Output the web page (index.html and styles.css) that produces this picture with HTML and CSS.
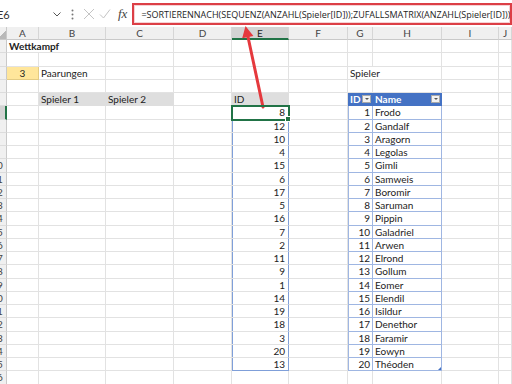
FILE: index.html
```html
<!DOCTYPE html>
<html lang="de">
<head>
    <meta charset="UTF-8">
    <title>Wettkampf</title>
    <link rel="stylesheet" href="styles.css">
</head>
<body>
    <div class="app">
        <div class="formula-bar">
            <div class="name-box">
                <span class="cell-ref">E6</span>
                <svg class="chev" width="8" height="5" viewBox="0 0 8 5"><polyline points="0.5,0.5 4,4 7.5,0.5" fill="none" stroke="#555" stroke-width="1"/></svg>
            </div>
            <svg class="dots" width="3" height="11" viewBox="0 0 3 11"><circle cx="1.5" cy="1.5" r="1" fill="#777"/><circle cx="1.5" cy="5.5" r="1" fill="#777"/><circle cx="1.5" cy="9.5" r="1" fill="#777"/></svg>
            <svg class="fb-icon" width="12" height="12" viewBox="0 0 12 12"><path d="M1 1L11 11M11 1L1 11" stroke="#c4c4c4" stroke-width="1"/></svg>
            <svg class="fb-icon" width="12" height="12" viewBox="0 0 12 12"><path d="M1 6.5L4.5 10L11 1.5" fill="none" stroke="#c4c4c4" stroke-width="1"/></svg>
            <span class="fx">fx</span>
            <div class="formula">=SORTIERENNACH(SEQUENZ(ANZAHL(Spieler[ID]));ZUFALLSMATRIX(ANZAHL(Spieler[ID])))</div>
        </div>

        <div class="sheet" id="sheet"></div>

        <svg class="arrow" width="512" height="384" viewBox="0 0 512 384">
            <line x1="263" y1="107" x2="247.8" y2="36" stroke="#e5393d" stroke-width="3" stroke-linecap="round"/>
            <polygon points="245.5,26 253.4,36 242.2,38.2" fill="#e5393d"/>
        </svg>
    </div>

    <script>
        const COLS = ['A', 'B', 'C', 'D', 'E', 'F', 'G', 'H', 'I', 'J'];
        const ROWS = 26;
        const ids = [8, 12, 10, 4, 15, 6, 17, 5, 16, 7, 2, 11, 9, 1, 14, 19, 18, 3, 20, 13];
        const players = ['Frodo', 'Gandalf', 'Aragorn', 'Legolas', 'Gimli', 'Samweis', 'Boromir',
            'Saruman', 'Pippin', 'Galadriel', 'Arwen', 'Elrond', 'Gollum', 'Eomer', 'Elendil',
            'Isildur', 'Denethor', 'Faramir', 'Eowyn', 'Théoden'];

        const cells = {
            A1: { text: 'Wettkampf', cls: 'bold', span: 2 },
            A3: { text: '3', cls: 'input' },
            B3: { text: 'Paarungen' },
            B5: { text: 'Spieler 1', cls: 'label' },
            C5: { text: 'Spieler 2', cls: 'label' },
            E5: { text: 'ID', cls: 'label' },
            G3: { text: 'Spieler', span: 2 },
            G5: { text: 'ID', cls: 'thead', filter: true },
            H5: { text: 'Name', cls: 'thead', filter: true }
        };

        ids.forEach((id, i) => {
            let cls = 'num spill';
            if (i === 0) cls += ' selected';
            if (i === ids.length - 1) cls += ' spill-end';
            cells['E' + (i + 6)] = { text: id, cls };
        });

        players.forEach((name, i) => {
            const last = i === players.length - 1 ? ' tlast' : '';
            cells['G' + (i + 6)] = { text: i + 1, cls: 'num tcell tid' + last };
            cells['H' + (i + 6)] = { text: name, cls: 'tcell tname' + last };
        });

        function cellHtml(cls, content, span) {
            const style = span ? ` style="grid-column: span ${span}"` : '';
            return `<div class="cell ${cls}"${style}>${content}</div>`;
        }

        function renderSheet() {
            let html = '<div class="corner"></div>';
            COLS.forEach(c => {
                html += `<div class="col-head${c === 'E' ? ' active' : ''}">${c}</div>`;
            });

            for (let r = 1; r <= ROWS; r++) {
                html += `<div class="row-head${r === 6 ? ' active' : ''}"><span>${r}</span></div>`;
                for (let i = 0; i < COLS.length; i++) {
                    const cell = cells[COLS[i] + r];
                    if (!cell) {
                        html += cellHtml('', '');
                        continue;
                    }
                    let content = `<span class="txt">${cell.text}</span>`;
                    if (cell.filter) content += '<i class="dd"></i>';
                    html += cellHtml(cell.cls || '', content, cell.span);
                    if (cell.span) i += cell.span - 1;
                }
            }
            document.getElementById('sheet').innerHTML = html;
        }

        renderSheet();
    </script>
</body>
</html>
```

FILE: styles.css
```css
/* Grundlayout */
* {
    box-sizing: border-box;
}

body {
    margin: 0;
    font-family: Lato, 'Liberation Sans', sans-serif;
    color: #222;
    background-color: #fff;
    overflow: hidden;
}

.app {
    position: relative;
    width: 512px;
    height: 384px;
    overflow: hidden;
}

/* Formelleiste */
.formula-bar {
    display: flex;
    align-items: center;
    height: 27px;
    padding: 3px 0 2px;
    background-color: #fff;
}

.name-box {
    display: flex;
    align-items: center;
    justify-content: space-between;
    width: 66px;
    height: 100%;
    margin-left: -3px;
    padding-right: 2px;
    font-size: 11px;
    color: #333;
}

.dots {
    margin-left: 8px;
}

.fb-icon {
    margin-left: 9px;
}

.fb-icon + .fb-icon {
    margin-left: 4px;
}

.fx {
    margin-left: 7px;
    font-family: 'Liberation Serif', serif;
    font-style: italic;
    font-size: 13px;
    color: #444;
}

.formula {
    flex: 1;
    display: flex;
    align-items: center;
    height: 22px;
    margin-left: 5px;
    padding-left: 7px;
    border: 2px solid #dc3f46;
    box-shadow: inset 0 0 0 1px #f6d2d4;
    font-family: 'Open Sans', sans-serif;
    font-size: 9px;
    color: #1e1e1e;
    white-space: nowrap;
    overflow: hidden;
}

/* Tabellenblatt */
.sheet {
    display: grid;
    grid-template-columns: 7px 32px 67px 68px 58px 57px 59px 25px 69px 57px 1fr;
    grid-template-rows: 13px repeat(26, 13.25px);
    font-size: 10px;
}

.corner {
    background: linear-gradient(135deg, #f0f0f0 55%, #b8b8b8 55%);
    border-right: 1px solid #c9c9c9;
    border-bottom: 1px solid #c9c9c9;
}

.col-head {
    display: flex;
    align-items: center;
    justify-content: center;
    background-color: #f0f0f0;
    border-right: 1px solid #d6d6d6;
    border-bottom: 1px solid #c9c9c9;
    color: #444;
}

.col-head.active {
    background-color: #d3d3d3;
    border-bottom: 2px solid #217346;
    color: #222;
}

.row-head {
    overflow: hidden;
    background-color: #f0f0f0;
    border-right: 1px solid #c9c9c9;
    border-bottom: 1px solid #dcdcdc;
    color: #444;
    line-height: 13px;
}

.row-head span {
    display: block;
    width: 24px;
    margin-left: -15px;
    text-align: center;
}

.row-head.active {
    background-color: #d3d3d3;
    border-right: 2px solid #217346;
}

.cell {
    position: relative;
    display: flex;
    align-items: center;
    padding: 0 2px;
    border-right: 1px solid #e2e2e2;
    border-bottom: 1px solid #e2e2e2;
    white-space: nowrap;
}

.bold {
    font-weight: bold;
}

.num {
    justify-content: flex-end;
}

.input {
    justify-content: center;
    background-color: #ffe69b;
    border-color: #e3cb83;
}

.label {
    background-color: #dedede;
    border-color: #dedede;
}

/* Überlaufbereich */
.spill {
    padding-right: 3px;
    border-right-color: #7f9fd9;
    box-shadow: inset 1px 0 0 #7f9fd9;
}

.spill-end {
    border-bottom-color: #7f9fd9;
}

.selected {
    z-index: 1;
    outline: 2px solid #217346;
    outline-offset: -1px;
}

.selected::after {
    content: '';
    position: absolute;
    right: -3px;
    bottom: -3px;
    width: 4px;
    height: 4px;
    background-color: #217346;
    border: 1px solid #fff;
}

/* Spieler-Tabelle */
.thead {
    justify-content: space-between;
    padding-right: 1px;
    background-color: #4472c4;
    border-color: #4472c4;
    color: #fff;
    font-weight: bold;
}

.dd {
    width: 9px;
    height: 8px;
    background-color: #f2f2f2;
    border: 1px solid #a9a9a9;
    position: relative;
}

.dd::after {
    content: '';
    position: absolute;
    left: 2px;
    top: 2px;
    border-left: 2px solid transparent;
    border-right: 2px solid transparent;
    border-top: 2px solid #555;
}

.tcell {
    border-bottom-color: #9fb6e2;
    border-right-color: #9fb6e2;
}

.tid {
    box-shadow: inset 1px 0 0 #9fb6e2;
}

.tlast.tname::after {
    content: '';
    position: absolute;
    right: 0;
    bottom: 0;
    border-left: 3px solid transparent;
    border-bottom: 3px solid #4472c4;
}

/* Pfeil */
.arrow {
    position: absolute;
    top: 0;
    left: 0;
    pointer-events: none;
}
```
